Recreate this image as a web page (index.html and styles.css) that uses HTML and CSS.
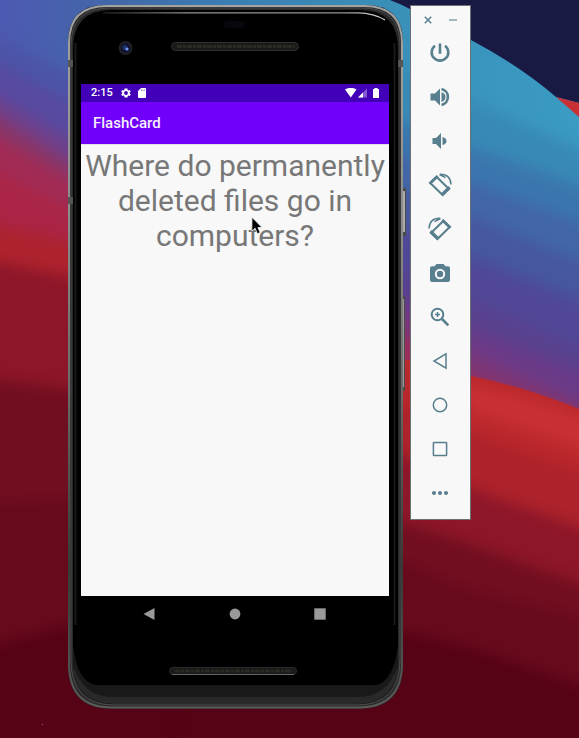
FILE: index.html
```html
<!DOCTYPE html>
<html lang="en">
<head>
<meta charset="utf-8">
<title>FlashCard</title>
<link rel="stylesheet" href="styles.css">
</head>
<body>
<svg class="wallpaper" viewBox="0 0 579 738" aria-hidden="true">
  <defs>
    <filter id="soft" x="-10%" y="-10%" width="120%" height="120%" color-interpolation-filters="sRGB"><feGaussianBlur stdDeviation="6 7"/></filter>
    <linearGradient id="top"><stop offset="0" stop-color="#4d59b2"/><stop offset=".2" stop-color="#4268a8"/><stop offset=".38" stop-color="#3b7db2"/><stop offset=".7" stop-color="#3991b9"/><stop offset="1" stop-color="#3b9bc3"/></linearGradient>
  </defs>
  <rect width="579" height="738" fill="url(#top)"/>
  <g filter="url(#soft)">
    <path fill="#4c54a7" d="M-30 25L75 75L240 200V800H-30z"/>
    <path fill="#574aa0" d="M-30 47L75 105L240 240V800H-30z"/>
    <path fill="#6e408d" d="M-30 80L75 142L240 260V800H-30z"/>
    <path fill="#883669" d="M-30 97L75 165L240 280V800H-30z"/>
    <path fill="#a22b55" d="M-30 120L75 182L240 300V800H-30z"/>
    <path fill="#aa2545" d="M-30 158L75 212L240 320V800H-30z"/>
    <path fill="#ad222d" d="M-30 220L75 243L240 330V800H-30z"/>
    <path fill="#8d1628" d="M-30 257L75 278L240 340V800H-30z"/>
    <path fill="#710e20" d="M-30 376L75 390L240 400V800H-30z"/>
    <path fill="#670a1c" d="M-30 505L75 500L240 500V800H-30z"/>
    <path fill="#560315" d="M-30 652L75 624L240 610V800H-30z"/>
    <path fill="#3889b6" d="M240 50L410 75L471 102L620 166V800H240z"/>
    <path fill="#3a76ad" d="M240 70L410 125L471 147L620 200V800H240z"/>
    <path fill="#4266a6" d="M240 100L410 158L471 182L620 237V800H240z"/>
    <path fill="#46579f" d="M240 130L410 195L471 217L620 279V800H240z"/>
    <path fill="#504897" d="M240 170L410 233L471 257L620 316V800H240z"/>
    <path fill="#58418f" d="M240 200L410 275L471 298L620 364V800H240z"/>
    <path fill="#6a3a88" d="M240 240L410 300L471 328L620 387V800H240z"/>
    <path fill="#7d3676" d="M240 260L410 320L471 352L620 421V800H240z"/>
    <path fill="#9b2d5c" d="M240 280L410 340L471 376L620 450V800H240z"/>
  </g>
  <path fill="#bb282c" d="M240 330L403 359L471 376Q525 387 579 409V700H240z"/>
  <g filter="url(#soft)">
    <path fill="#c83034" d="M460 384Q530 394 620 432V462L471 412z"/>
    <path fill="#ad222b" d="M240 395L405 405L471 433Q530 455 620 484V800H240z"/>
    <path fill="#8d1628" d="M240 420L405 456L471 489Q530 510 620 542V800H240z"/>
    <path fill="#710e20" d="M240 460L405 524L471 545Q530 566 620 598V800H240z"/>
    <path fill="#670a1c" d="M240 560L405 564L471 592Q530 604 620 630V800H240z"/>
    <path fill="#560315" d="M240 620L405 632L471 648Q530 668 620 700V800H240z"/>
    <path fill="#560315" d="M180 670H410V800H180z"/>
  </g>
  <path fill="#191a43" d="M390 0L402 5L471 40Q520 66 556 97L579 103V0z"/>
  <path fill="#c83036" d="M556 97L579 103V117z"/>
  <rect x="42" y="724" width="1" height="1" fill="#b58"/>
</svg>

<main class="desktop">
  <section class="phone">
    <svg class="shell" viewBox="0 0 340 704" aria-hidden="true">
      <defs>
        <linearGradient id="metal" x2="0" y2="1"><stop offset="0" stop-color="#a3a3a3"/><stop offset=".3" stop-color="#8c8c8c"/><stop offset=".55" stop-color="#6a6a6a"/><stop offset=".8" stop-color="#383838"/><stop offset="1" stop-color="#5b5b5b"/></linearGradient>
        <linearGradient id="shine"><stop offset="0" stop-color="#222"/><stop offset=".3" stop-color="#8d9692"/><stop offset=".85" stop-color="#8d9692"/><stop offset="1" stop-color="#ddd"/></linearGradient>
        <clipPath id="face"><path d="M5 45Q5 5 43 5H292Q330 5 330 45V655Q330 699 287 699H48Q5 699 5 655z"/></clipPath>
      </defs>
      <rect x="333" y="183" width="5" height="48" rx="1" fill="#4b4b4b"/>
      <rect x="334" y="186" width="3" height="41" fill="#aaa"/>
      <rect x="333" y="291" width="4" height="95" rx="1" fill="#4b4b4b"/>
      <rect x="333" y="294" width="3" height="88" fill="#999"/>
      <path d="M0 37Q0 0 38 0H297Q335 0 335 37V660Q335 704 290 704H44Q0 704 0 660z" fill="#292929"/>
      <path d="M1 38Q1 1 39 1H296Q334 1 334 38V658Q334 702.5 290 702.5H44Q1 702.5 1 658z" fill="none" stroke="url(#metal)" stroke-width="2"/>
      <path d="M3 40Q3 3 41 3H294Q332 3 332 40V655Q332 700 289 700H46Q3 700 3 655z" fill="none" stroke="#4b4b4b"/>
      <g clip-path="url(#face)">
        <rect width="340" height="704" fill="#000"/>
        <path d="M5 640Q9 677 28 680H308Q326 676 330 640V704H5z" fill="#191919"/>
        <path d="M5 660Q15 692 45 692H290Q320 692 330 660V704H5z" fill="#292929"/>
        <path d="M7.500 38V620M326.500 38V620" stroke="#191919" stroke-width="2"/>
      </g>
      <path d="M35 7.800H290Q306 8 317 15" fill="none" stroke="url(#shine)" stroke-width="1.200"/>
      <path d="M0 55h5v7H0zM0 192h5v7H0zM330 55h5v7h-5z" fill="#555"/>
      <rect x="156" y="16" width="21" height="7" rx="3.500" fill="#07080e"/>
      <circle cx="57.500" cy="43" r="7" fill="#202024"/>
      <circle cx="57.500" cy="43" r="4.700" fill="#0d1130"/>
      <circle cx="57" cy="42.500" r="2.500" fill="#223368"/>
      <circle cx="59" cy="44" r="1.600" fill="#7595ef"/>
      <rect x="103.500" y="37.500" width="127" height="8" rx="4" fill="#191919" stroke="#303030"/>
      <path d="M109 41.500H227" stroke="#2b2b25" stroke-width="3" stroke-dasharray="5 1 3 1"/>
      <rect x="101.500" y="662.500" width="127" height="7" rx="3.500" fill="#191919" stroke="#2b2b2b"/>
      <path d="M104 669.500H226" stroke="#666"/>
      <path d="M107 666H224" stroke="#2b2924" stroke-width="3" stroke-dasharray="5 1 3 1"/>
    </svg>

    <div class="screen">
      <div class="status">
        <span class="clock">2:15</span>
        <svg class="gear" viewBox="2 2 20 20"><path fill-rule="evenodd" d="M19.400 13a7 7 0 0 0 0-2l2.100-1.600-2-3.500-2.500 1a7 7 0 0 0-1.700-1L15 3H9l-.4 2.900a7 7 0 0 0-1.700 1l-2.500-1-2 3.500L4.500 11a7 7 0 0 0 0 2l-2.100 1.600 2 3.500 2.500-1a7 7 0 0 0 1.700 1L9 21h6l.4-2.900a7 7 0 0 0 1.700-1l2.500 1 2-3.500zM12 15.800a3.800 3.800 0 1 1 0-7.600 3.800 3.800 0 0 1 0 7.600z"/></svg>
        <svg class="sd" viewBox="0 0 8 10"><path d="M3 0h4q1 0 1 1v8q0 1-1 1H1q-1 0-1-1V3z"/><path class="slot" d="M3 1.500h1v1.500H3zM4.700 1.500h.8v1.500h-.8zM6.200 1.500H7v1.500h-.8z"/></svg>
        <svg class="signals" viewBox="0 0 34 10"><path d="M0 1.500Q5.800-1.800 11.500 1.500L5.800 9.500z"/><path d="M22 .5V9.500h-9z" opacity=".35"/><path d="M18 4.500v5h-5z"/><path d="M28 1h1.500V0h3v1H34v9h-6z"/></svg>
      </div>
      <header class="appbar">FlashCard</header>
      <p class="question">Where do permanently<br>deleted files go in<br>computers?</p>
    </div>

    <nav class="navkeys">
      <svg viewBox="0 0 12 12"><path d="M11.500 0v12L.5 6z"/></svg>
      <svg viewBox="0 0 12 12"><circle cx="6" cy="6" r="5.400"/></svg>
      <svg viewBox="0 0 12 12"><path d="M.3.3h11.400v11.400H.3z"/></svg>
    </nav>
  </section>

  <aside class="toolbar">
    <div class="window-buttons">
      <svg viewBox="0 0 8 8"><path d="M.8.8l6.400 6.400M7.200.8L.8 7.200"/></svg>
      <svg class="minimize" viewBox="0 0 8 8"><path d="M0 4h8"/></svg>
    </div>
    <svg class="tool" viewBox="0 0 24 24"><path class="line bold" d="M12 2.500v10.300M7 4.700a8.300 8.300 0 1 0 10 0"/></svg>
    <svg class="tool" viewBox="0 0 24 24"><path d="M2.500 8.500H7L12 3.500v17l-5-5H2.500zM13.500 7q4 1.500 4 5t-4 5z"/><path class="line bold" d="M13.500 4a8.200 8.200 0 0 1 0 16"/></svg>
    <svg class="tool" viewBox="0 0 24 24"><path d="M4.500 9H8l5-5v16l-5-5H4.500zM14.500 8q4 1 4 4t-4 4z"/></svg>
    <svg class="tool" viewBox="0 0 24 24"><g id="rotate"><path class="line" d="M2.300 10L8.700 4 21 16 14.600 22z"/><path d="M.6 9.700L8.700 2l2 2-8.100 7.700zM12.600 20.700l8-7.700 2 2.500-8 7.700z"/><path class="line thin" d="M12 1.200Q22.500 1 23 11.500M11.500 1.500l6 3.200"/></g></svg>
    <svg class="tool" viewBox="0 0 24 24"><use href="#rotate" transform="matrix(-1 0 0 1 24 0)"/></svg>
    <svg class="tool" viewBox="0 0 24 24"><path fill-rule="evenodd" d="M8.500 3h7l2 2.200H20q2 0 2 2V19q0 2-2 2H4q-2 0-2-2V7.200q0-2 2-2h2.500zM12 7.800a5.200 5.200 0 1 0 0 10.400 5.200 5.200 0 0 0 0-10.400zm0 2a3.200 3.200 0 1 1 0 6.400 3.200 3.200 0 0 1 0-6.400z"/></svg>
    <svg class="tool" viewBox="0 0 24 24"><circle class="line" cx="9.500" cy="9.500" r="5.800"/><path class="line bold" d="M14 14l6.300 6.300"/><path class="line thin" d="M7 9.500h5M9.500 7v5"/></svg>
    <svg class="tool" viewBox="0 0 24 24"><path class="line thin" d="M18 4.800v14.300L6 12z"/></svg>
    <svg class="tool" viewBox="0 0 24 24"><circle class="line thin" cx="12" cy="12" r="6.700"/></svg>
    <svg class="tool" viewBox="0 0 24 24"><rect class="line thin" x="5.400" y="5.400" width="13.200" height="13.200" rx=".5"/></svg>
    <svg class="tool" viewBox="0 0 24 24"><circle cx="6" cy="12" r="2"/><circle cx="12" cy="12" r="2"/><circle cx="18" cy="12" r="2"/></svg>
  </aside>
</main>
<svg class="pointer" viewBox="0 0 12 20"><path d="M1 1v15l3.500-3 2.500 6 3-1.300-2.500-5.500H12z"/></svg>
</body>
</html>
```

FILE: styles.css
```css
* { box-sizing: border-box; }
body {
  margin: 0;
  width: 579px;
  height: 738px;
  overflow: hidden;
  position: relative;
  font-family: Roboto, "Liberation Sans", sans-serif;
}
svg { display: block; flex: none; }
.wallpaper { position: absolute; inset: 0; width: 579px; height: 738px; }
.desktop {
  position: relative;
  display: flex;
  align-items: flex-start;
  gap: 7px;
  padding: 5px 0 0 68px;
}
.phone {
  position: relative;
  width: 335px;
  height: 704px;
  padding: 79px 14px 0 13px;
}
.shell { position: absolute; top: 0; left: 0; width: 340px; height: 704px; }
.screen {
  position: relative;
  height: 512px;
  background: #f8f8f8;
}
.status {
  display: flex;
  align-items: center;
  height: 18px;
  padding: 0 10px 0 10px;
  background: #4200b8;
  color: #fff;
  fill: #fff;
}
.clock { width: 30px; font-size: 11px; font-weight: 500; line-height: 18px; }
.gear { width: 10px; height: 10px; }
.sd { width: 8px; height: 10px; margin-left: 7px; }
.slot { fill: #8f72d6; }
.signals { width: 34px; height: 10px; margin-left: auto; }
.appbar {
  height: 42px;
  padding-left: 12px;
  background: #7000fa;
  color: #f6efff;
  font-size: 15px;
  font-weight: 500;
  line-height: 43px;
}
.question {
  margin: 0;
  padding-top: 4px;
  box-shadow: inset 0 1px #e3e3e3;
  color: #777;
  font-size: 30px;
  line-height: 35px;
  text-align: center;
  white-space: nowrap;
}
.navkeys {
  position: relative;
  display: flex;
  justify-content: space-between;
  padding: 12px 63px 0 62px;
  fill: #999;
}
.navkeys svg { width: 12px; height: 12px; }
.toolbar {
  width: 61px;
  height: 515px;
  border: 1px solid #6c7072;
  background: #f8f8f8;
  display: flex;
  flex-direction: column;
  align-items: center;
  gap: 20px;
  padding: 10px 1px 0 0;
  fill: #587f8e;
}
.window-buttons {
  display: flex;
  gap: 17px;
  margin-bottom: -3px;
  padding-left: 1px;
  fill: none;
  stroke: #587f8e;
  stroke-width: 1.5;
}
.window-buttons svg { width: 8px; height: 8px; }
.minimize { opacity: .7; }
.tool { width: 24px; height: 24px; }
.line { fill: none; stroke: #587f8e; stroke-width: 2; }
.bold { stroke-width: 2.6; }
.thin { stroke-width: 1.5; }
.pointer {
  position: absolute;
  left: 251px;
  top: 216px;
  width: 11px;
  height: 19px;
  fill: #000;
  stroke: #fff;
  stroke-width: .8;
}
```
